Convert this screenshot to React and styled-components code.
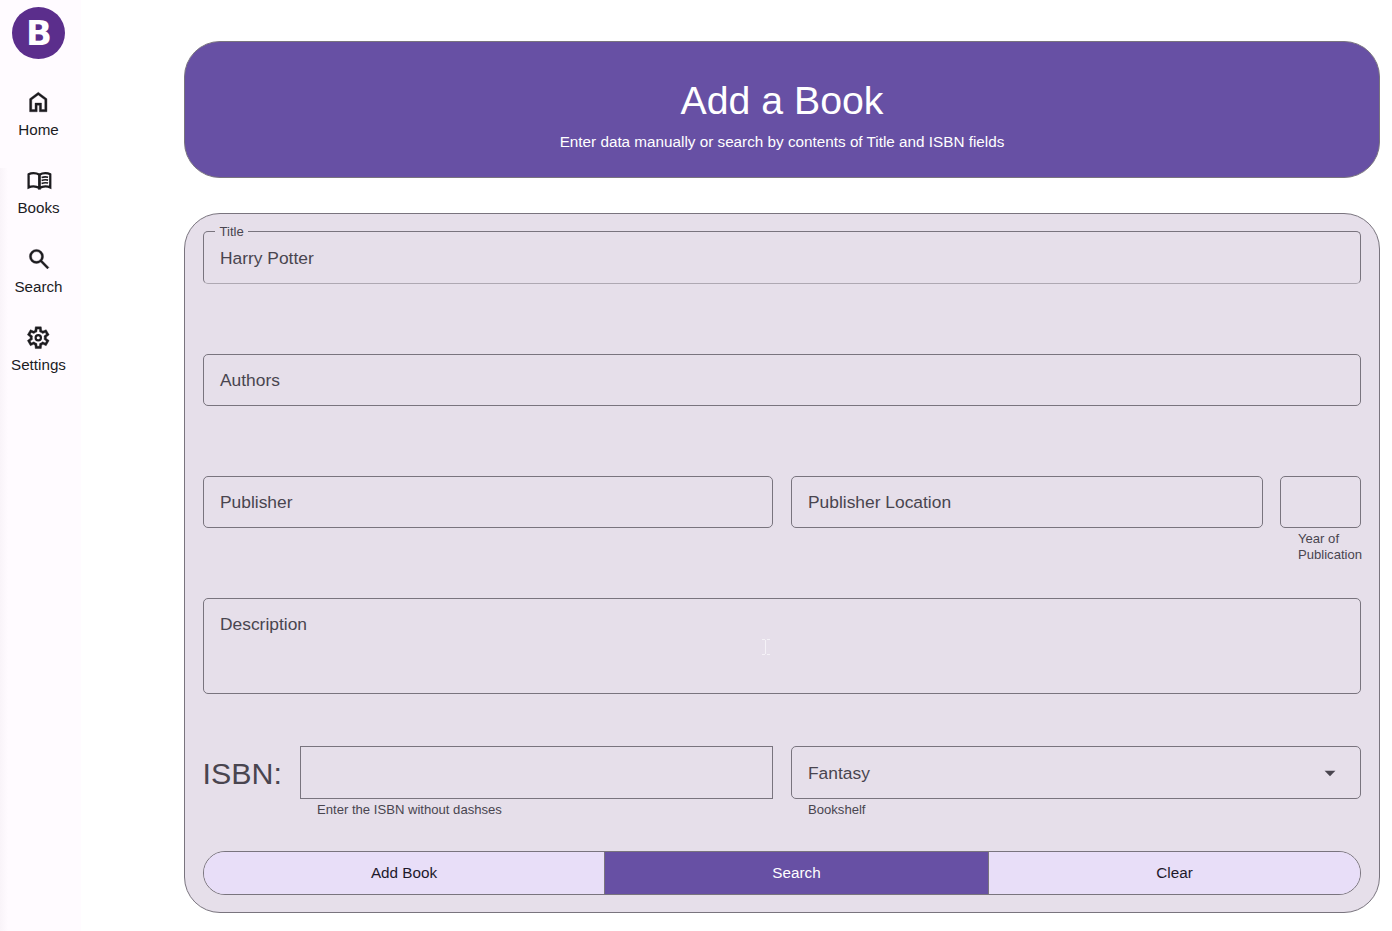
import React from 'react';
import styled, { createGlobalStyle } from 'styled-components';
import { MdArrowDropDown } from 'react-icons/md';

const GlobalStyle = createGlobalStyle`
  * { box-sizing: border-box; }
  body {
    margin: 0;
    background: #fff;
    font-family: "Liberation Sans", Arial, sans-serif;
    overflow: hidden;
  }
`;

const Page = styled.div`
  display: flex;
  width: 1392px;
  height: 931px;
`;

const Rail = styled.nav`
  width: 81px;
  height: 931px;
  padding: 7px 4px 0 0;
  display: flex;
  flex-direction: column;
  align-items: center;
  background: linear-gradient(90deg, #f9f4f9 0, #fffbff 8px) 0 168px no-repeat, #fffbff;
`;

const Logo = styled.div`
  width: 53px;
  height: 52px;
  border-radius: 50%;
  background: #5b2e8c;
  color: #fff;
  font: bold 34px/52px "DejaVu Sans", Verdana, sans-serif;
  text-align: center;
  padding-left: 1px;
  margin-bottom: 30px;
`;

const NavItem = styled.a`
  height: 78.3px;
  display: flex;
  flex-direction: column;
  align-items: center;
  color: #1c1b1f;
  font-size: 15.2px;
  line-height: 20px;
  white-space: nowrap;
`;

const NavIcon = styled.svg`
  width: 26px;
  height: 26px;
  margin: 0 0 5px;
  flex: none;
`;

const Main = styled.main`
  flex: 1;
  padding: 41px 12px 18px 103px;
`;

const Banner = styled.header`
  height: 137px;
  margin-bottom: 35px;
  padding-top: 33px;
  border: 1px solid #79747e;
  border-radius: 36px;
  background: #6750a4;
  color: #fff;
  text-align: center;
`;

const Heading = styled.h1`
  margin: 0;
  font-size: 39.25px;
  font-weight: 400;
  line-height: 50px;
`;

const Subtitle = styled.p`
  margin: 7px 0 0;
  font-size: 15.28px;
  line-height: 20px;
`;

const Form = styled.form`
  height: 700px;
  padding: 17px 18px;
  border: 1px solid #79747e;
  border-radius: 36px;
  background: #e6dfea;
  color: #49454f;
`;

const Row = styled.div`
  display: flex;
  align-items: flex-start;
  height: ${p => p.$height}px;
`;

const Field = styled.div`
  flex: ${p => (p.$width ? 'none' : 1)};
  width: ${p => (p.$width ? p.$width + 'px' : 'auto')};
  margin-left: ${p => p.$gap || 0}px;
`;

const Outline = styled.div`
  position: relative;
  display: flex;
  justify-content: space-between;
  height: ${p => p.$height || 52}px;
  padding: 0 16px;
  border: 1px solid #79747e;
  border-bottom-color: ${p => (p.$soft ? '#aea8b2' : '#79747e')};
  border-radius: ${p => (p.$square ? 0 : 5)}px;
  font-size: 17.4px;
  line-height: ${p => (p.$height === 53 ? 53 : 51)}px;
  white-space: nowrap;
`;

const Arrow = styled(MdArrowDropDown)`
  width: 26px;
  height: 26px;
  margin: 13px 1px 0 0;
`;

const Floating = styled.span`
  position: absolute;
  top: -8px;
  left: 11px;
  padding: 0 4.5px;
  background: #e6dfea;
  font-size: 13.1px;
  line-height: 16px;
`;

const Helper = styled.div`
  padding: 3px 0 0 ${p => p.$indent || 17}px;
  font-size: 13.1px;
  line-height: 16px;
`;

const IsbnLabel = styled.span`
  width: 97px;
  font-size: 30.4px;
  line-height: 55px;
  text-indent: -0.5px;
`;

const TextCursor = styled.svg`
  position: absolute;
  left: 557px;
  top: 39px;
  width: 10px;
  height: 18px;
`;

const Segments = styled.div`
  display: flex;
  height: 44px;
  border: 1px solid #79747e;
  border-radius: 22px;
  overflow: hidden;
`;

const Segment = styled.button`
  flex: ${p => (p.$width ? 'none' : 1)};
  width: ${p => (p.$width ? p.$width + 'px' : 'auto')};
  margin: 0;
  padding: 0;
  border: 0;
  border-right: ${p => (p.$width ? '1px solid #79747e' : '0')};
  background: ${p => (p.$active ? '#6750a4' : '#e8def8')};
  color: ${p => (p.$active ? '#fff' : '#1d192b')};
  font: 15.25px/42px "Liberation Sans", Arial, sans-serif;
`;

const HomeIcon = () => (
  <NavIcon viewBox="-10 -960 960 960" fill="currentColor" stroke="currentColor" strokeWidth="14">
    <path d="M240-200h120v-240h240v240h120v-360L480-740 240-560v360Zm-80 80v-480l320-240 320 240v480H520v-240h-80v240H160Z" />
  </NavIcon>
);

const BooksIcon = () => (
  <NavIcon viewBox="-0.4 -0.7 24 24" fill="none" stroke="currentColor" strokeWidth="2.1">
    <path d="M12 18.7C10.4 17.7 8.6 17.1 6.5 17.1c-1.6 0-3.1.3-4.5 1V6.1C3.4 5.35 4.9 5 6.5 5c2 0 3.9.5 5.5 1.5z" />
    <path d="M12 18.7c1.6-1 3.4-1.6 5.5-1.6 1.6 0 3.1.3 4.5 1V6.1C20.6 5.35 19.1 5 17.5 5c-2 0-3.9.5-5.5 1.5z" />
    <path strokeWidth="1.5" d="M14 9.1c1.9-.8 3.9-.9 6-.4M14 11.8c1.9-.8 3.9-.9 6-.4M14 14.5c1.9-.8 3.9-.9 6-.4" />
  </NavIcon>
);

const SearchIcon = () => (
  <NavIcon viewBox="-6 -966 960 960" fill="currentColor" stroke="currentColor" strokeWidth="14">
    <path d="M784-120 532-372q-30 24-69 38t-83 14q-109 0-184.5-75.5T120-580q0-109 75.5-184.5T380-840q109 0 184.5 75.5T640-580q0 44-14 83t-38 69l252 252-56 56ZM380-400q75 0 127.5-52.5T560-580q0-75-52.5-127.5T380-760q-75 0-127.5 52.5T200-580q0 75 52.5 127.5T380-400Z" />
  </NavIcon>
);

const SettingsIcon = () => (
  <NavIcon viewBox="-10 -986 960 960" fill="currentColor" stroke="currentColor" strokeWidth="16">
    <path fillRule="evenodd" d="m370-80-16-128q-13-5-24.5-12T307-235l-119 50L78-375l103-78q-1-7-1-13.5v-27q0-6.5 1-13.5L78-585l110-190 119 50q11-8 23-15t24-12l16-128h220l16 128q13 5 24.5 12t22.5 15l119-50 110 190-103 78q1 7 1 13.5v27q0 6.5-2 13.5l103 78-110 190-118-50q-11 8-23 15t-24 12L590-80H370Zm70-80h79l14-106q31-8 57.5-23.5T639-327l99 41 39-68-86-65q5-14 7-29.5t2-31.5q0-16-2-31.5t-7-29.5l86-65-39-68-99 42q-22-23-48.5-38.5T533-694l-13-106h-79l-14 106q-31 8-57.5 23.5T321-633l-99-41-39 68 86 64q-5 15-7 30t-2 32q0 16 2 31t7 30l-86 65 39 68 99-42q22 23 48.5 38.5T427-266l13 106Z" />
    <circle cx="480" cy="-480" r="98" fill="none" strokeWidth="80" />
  </NavIcon>
);

const navItems = [
  ['Home', HomeIcon],
  ['Books', BooksIcon],
  ['Search', SearchIcon],
  ['Settings', SettingsIcon],
];

export default function App() {
  return (
    <Page>
      <GlobalStyle />
      <Rail>
        <Logo>B</Logo>
        {navItems.map(([label, Icon]) => (
          <NavItem key={label}><Icon />{label}</NavItem>
        ))}
      </Rail>
      <Main>
        <Banner>
          <Heading>Add a Book</Heading>
          <Subtitle>Enter data manually or search by contents of Title and ISBN fields</Subtitle>
        </Banner>
        <Form>
          <Row $height={123}>
            <Field><Outline $height={53} $soft><Floating>Title</Floating>Harry Potter</Outline></Field>
          </Row>
          <Row $height={122}>
            <Field><Outline>Authors</Outline></Field>
          </Row>
          <Row $height={122}>
            <Field $width={570}><Outline>Publisher</Outline></Field>
            <Field $width={472} $gap={18}><Outline>Publisher Location</Outline></Field>
            <Field $width={81} $gap={17}>
              <Outline />
              <Helper $indent={18}>Year of<br />Publication</Helper>
            </Field>
          </Row>
          <Row $height={148}>
            <Field>
              <Outline $height={96}>
                Description
                <TextCursor viewBox="0 0 10 18" fill="none" stroke="#fff" strokeOpacity="0.6">
                  <path d="M1 1.5h3M6 1.5h3M4.5 2v14M1 16.5h3M6 16.5h3" />
                </TextCursor>
              </Outline>
            </Field>
          </Row>
          <Row $height={105}>
            <IsbnLabel>ISBN:</IsbnLabel>
            <Field $width={473}>
              <Outline $height={53} $square />
              <Helper>Enter the ISBN without dashses</Helper>
            </Field>
            <Field $gap={18}>
              <Outline $height={53}>Fantasy<Arrow /></Outline>
              <Helper>Bookshelf</Helper>
            </Field>
          </Row>
          <Segments>
            <Segment type="button" $width={401}>Add Book</Segment>
            <Segment type="button" $width={384} $active>Search</Segment>
            <Segment type="button">Clear</Segment>
          </Segments>
        </Form>
      </Main>
    </Page>
  );
}
